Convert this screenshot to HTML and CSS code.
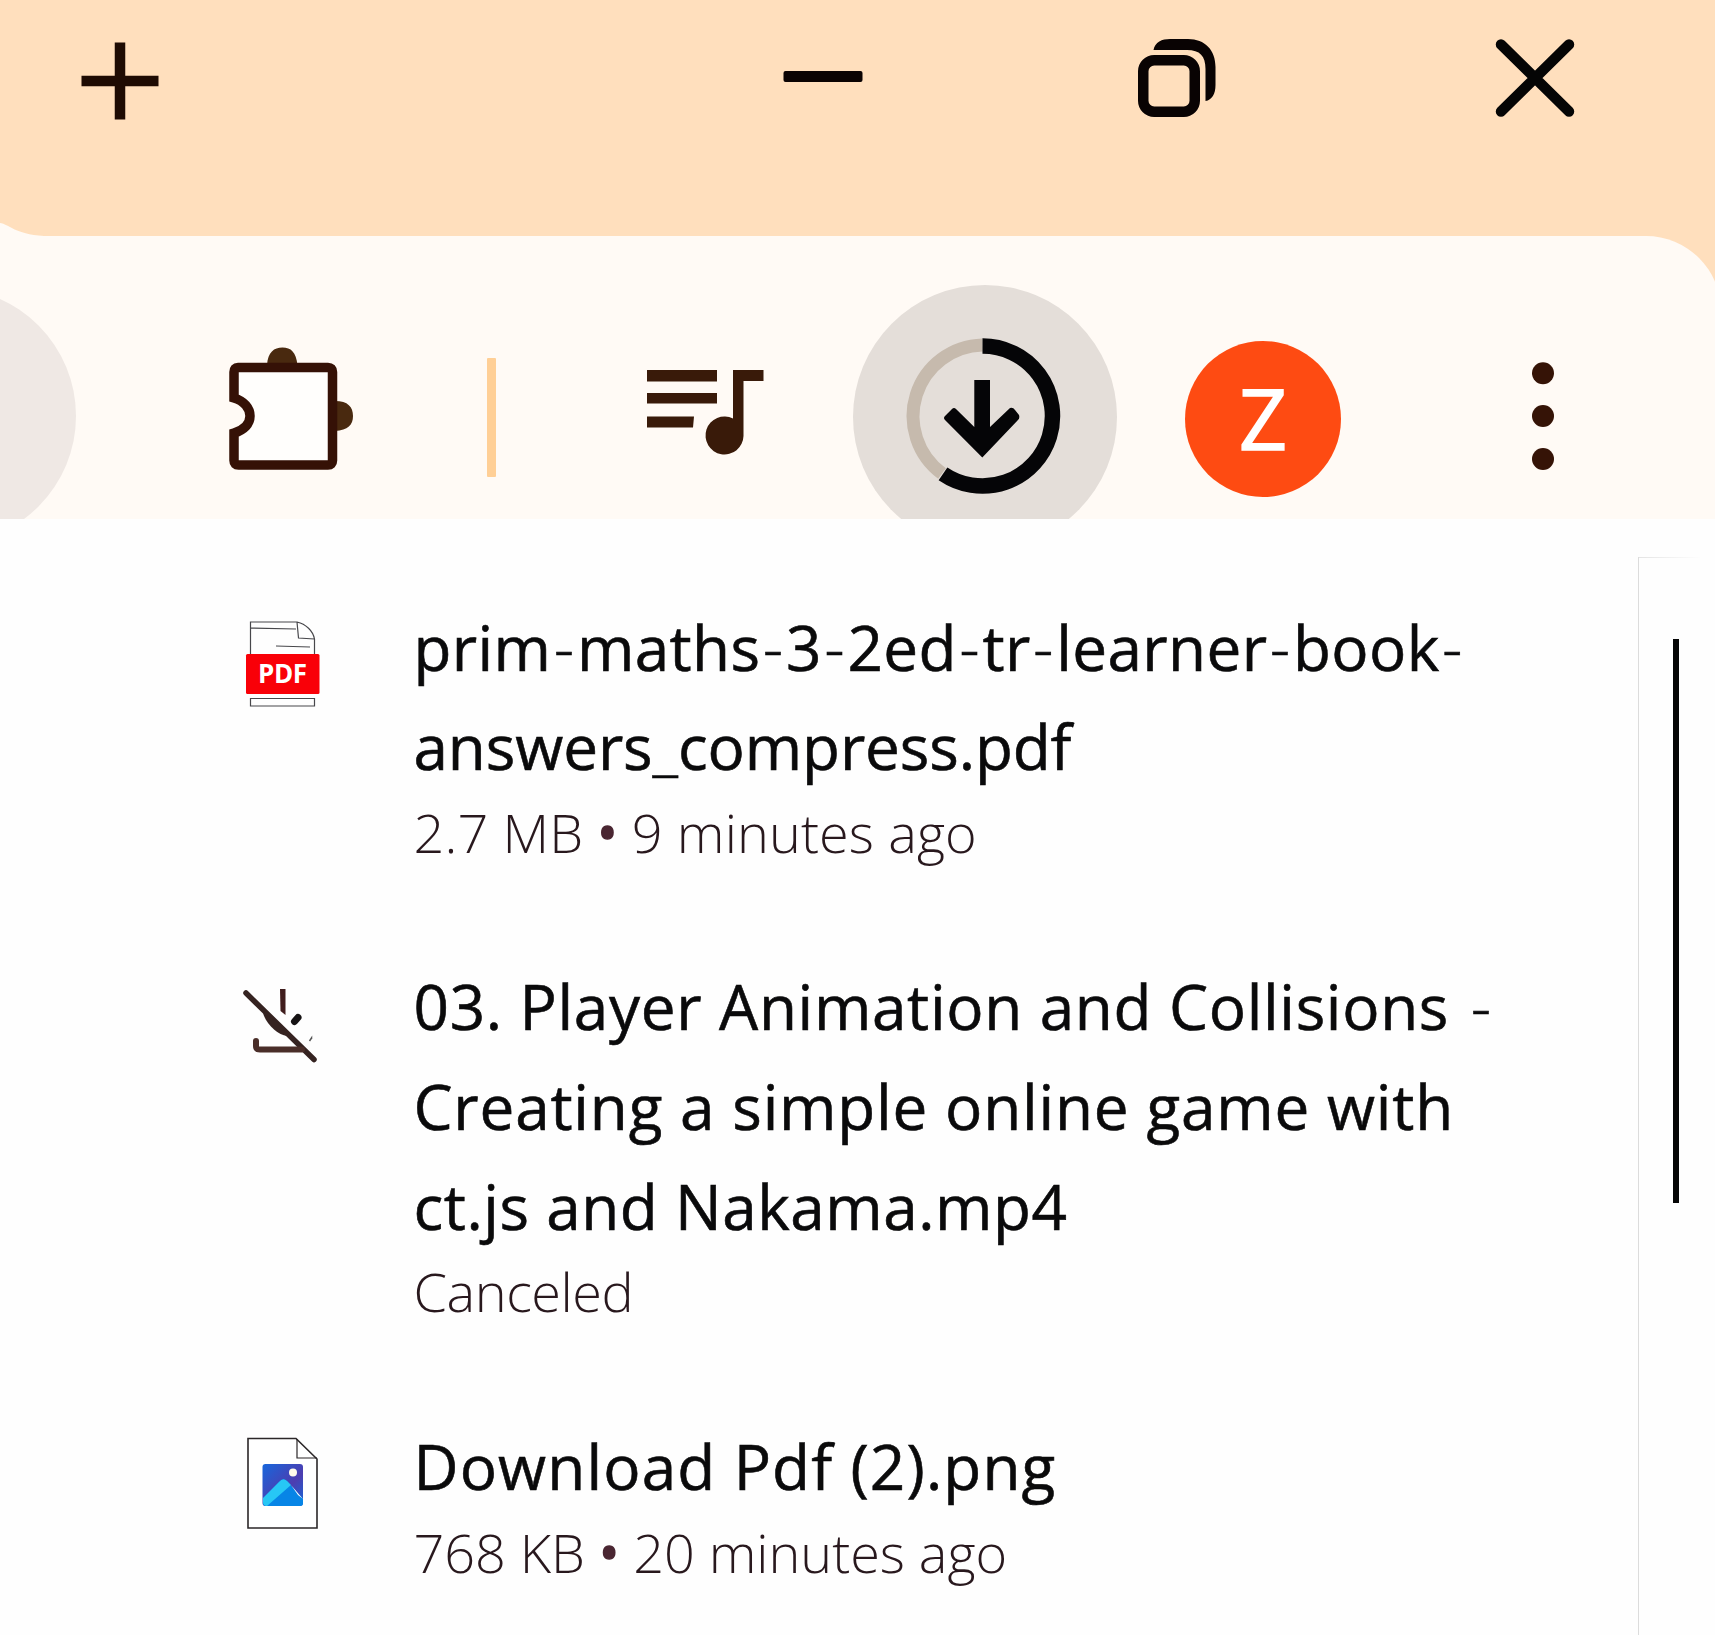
FILE: index.html
```html
<!DOCTYPE html>
<html lang="en">
<head>
<meta charset="utf-8">
<title>Downloads</title>
<link rel="stylesheet" href="styles.css">
</head>
<body>
<div class="window">
  <header class="titlebar">
    <svg class="tab-curve" width="44" height="13" viewBox="0 0 44 13"><path d="M0 0C9 1 14 11 44 13H0Z"/></svg>
    <svg class="new-tab" width="80" height="80" viewBox="0 0 80 80"><path d="M40 1.500V78.500M1.500 40H78.500"/></svg>
    <svg class="minimize" width="80" height="80" viewBox="0 0 80 80"><rect x=".5" y="32" width="79" height="11" rx="2"/></svg>
    <svg class="restore" width="80" height="80" viewBox="0 0 80 80"><rect x="6.250" y="22.250" width="51.500" height="51.500" rx="11"/><path class="solid" d="M16.500 12C18 4 25 1 33 1H51C68 1 78.500 12 78.500 29V47C78.500 56 75 62 68.500 63V31C68.500 18 63 12 50 12Z"/></svg>
    <svg class="close" width="80" height="80" viewBox="0 0 80 80"><path d="M6 6.500L74 73.500M74 6.500L6 73.500"/></svg>
  </header>
  <div class="toolbar-wrap">
  <nav class="toolbar">
    <span class="edge-button"></span>
    <svg class="puzzle" width="126" height="126" viewBox="228 345 126 126">
      <path class="tab" d="M267 365C268 352 274 347.500 282.500 347.500S296 352 297.500 365ZM335 401C348 401 353 407 353 416S348 430 335 431Z"/>
      <path class="body" d="M238 367.500H328Q332.500 367.500 332.500 372V460.500Q332.500 465 328 465H238.500Q234 465 234 460.500V433C244 430 250 424 250 416S244 401 234 398V372Q234 367.500 238 367.500Z"/>
    </svg>
    <span class="divider"></span>
    <svg class="media" width="118" height="86" viewBox="647 370 118 86"><path d="M647 370H717V381.500H647ZM647 393H717V403.500H647ZM647 416.500H694L693 427.500H647ZM733 370H763.500V381H743.500V436A19 19 0 1 1 733 418.500Z"/></svg>
    <span class="downloads">
      <svg width="160" height="160" viewBox="903 336 160 160">
        <path class="track" d="M942 473.500A71.200 71.200 0 0 1 982.500 345"/>
        <path class="progress" d="M982.500 346A70 70 0 1 1 943 473.800"/>
        <path d="M974.300 380H990V427L1010 408Q1013 407 1015 410L1019 415Q1020 418 1018 420L982.300 457.500L945 420Q943 418 945 416L952 409Q954 407 956 409L974.300 427Z"/>
      </svg>
    </span>
    <span class="avatar">Z</span>
    <svg class="menu" width="24" height="110" viewBox="0 0 24 110"><circle cx="12" cy="12.300" r="11"/><circle cx="12" cy="55" r="11"/><circle cx="12" cy="98" r="11"/></svg>
  </nav>
  </div>
  <main class="panel">
    <section class="list">
      <article class="item">
        <svg class="icon pdf" width="76" height="90" viewBox="245 620 76 90">
          <path class="outline" d="M250.500 654V622H297C306 624 313 631 314.500 639V654M297 622L298.500 638L314.500 639M251 628L296 629M276 646L310 647M250.500 698.500H314.500V706H250.500Z"/>
          <rect x="246" y="654" width="73.500" height="40" rx="1.500" fill="#f90008"/>
          <text x="258" y="683" textLength="49">PDF</text>
        </svg>
        <div class="text">
          <div class="name first">prim<i>-</i>maths<i>-</i>3<i>-</i>2ed<i>-</i>tr<i>-</i>learner<i>-</i>book<i>-</i></div>
          <div class="name tight">answers<b>_</b>compress.pdf</div>
          <div class="meta">2.7 MB <b>•</b> 9 minutes ago</div>
        </div>
      </article>
      <article class="item">
        <svg class="icon" width="76" height="78" viewBox="242 986 76 78">
          <path d="M246 993L314 1059.500" fill="none" stroke="#352321" stroke-width="5.500" stroke-linecap="round"/>
          <path d="M263 1013C266 1024 278 1035 287 1036L280 1024Z" fill="#352321"/>
          <path d="M256 1041V1046Q256 1049.500 260 1049.500H302" fill="none" stroke="#4a2e29" stroke-width="6" stroke-linecap="round"/>
          <path d="M280 989H285.500V1015L280.500 1011Z" fill="#401d1d"/>
          <path d="M294.500 1021.500L298 1017.500" stroke="#161314" stroke-width="7" stroke-linecap="round"/>
          <path d="M309.500 1041L311.500 1038V1039" fill="none" stroke="#555" stroke-width="1.500"/>
        </svg>
        <div class="text">
          <div class="name long">03. Player Animation and Collisions <i>-</i></div>
          <div class="name wide">Creating a simple online game with</div>
          <div class="name medium">ct.js and Nakama.mp4</div>
          <div class="meta status">Canceled</div>
        </div>
      </article>
      <article class="item">
        <svg class="icon image" width="76" height="94" viewBox="245 1436 76 94">
          <defs><linearGradient id="sky" x1="0" y1="0" x2="1" y2="1"><stop offset="0" stop-color="#1767dc"/><stop offset=".6" stop-color="#4d3db0"/><stop offset="1" stop-color="#1467d8"/></linearGradient></defs>
          <path d="M248 1438.500H296L317 1459V1528H248Z" fill="#fff" stroke="#2b2728" stroke-width="1.600"/>
          <path d="M297 1439V1458H317" fill="none" stroke="#2b2728" stroke-width="1.200"/>
          <rect x="262.500" y="1464" width="40.500" height="42" rx="3" fill="url(#sky)"/>
          <path d="M263 1499L279 1482Q283 1477 287 1481L303 1499V1503Q303 1506 300 1506H266Q263 1506 263 1503Z" fill="#0785e6"/>
          <path d="M263 1498L279 1482Q283 1477 287 1481L291 1485L267 1506Q263 1506 263 1502Z" fill="#27c7f5"/>
          <path d="M291 1485L303 1499L298 1495Z" fill="#fff"/>
          <circle cx="293" cy="1472.500" r="4" fill="#fffbea"/>
        </svg>
        <div class="text">
          <div class="name file">Download Pdf (2).png</div>
          <div class="meta last">768 KB <b>•</b> 20 minutes ago</div>
        </div>
      </article>
    </section>
    <aside class="rail"><div class="thumb"></div></aside>
  </main>
</div>
</body>
</html>
```
FILE: styles.css
```css
* { box-sizing: border-box; }
body { margin: 0; background: #fff; font-family: "Open Sans", "Noto Sans", sans-serif; }
svg { display: block; flex: none; overflow: visible; }

.window { width: 1715px; height: 1635px; overflow: hidden; display: flex; flex-direction: column; }

.titlebar { height: 236px; flex: none; display: flex; align-items: flex-start; background: #ffdfbd; }
.titlebar svg { fill: none; stroke: #090303; stroke-width: 10.5; }
.titlebar .tab-curve { align-self: flex-end; fill: #fffaf5; stroke: none; }
.titlebar .new-tab { margin: 41px 0 0 35.5px; stroke: #1e0b03; stroke-linecap: butt; }
.titlebar .minimize { margin: 38.5px 0 0 623.5px; fill: #0b0303; stroke: none; }
.titlebar .restore { margin: 38px 0 0 273.5px; }
.titlebar .solid { fill: #090303; stroke: none; }
.titlebar .close { margin: 38px 0 0 278px; stroke: #050505; stroke-linecap: round; }

.toolbar-wrap { height: 283px; flex: none; overflow: hidden; background: #ffdfbd; }
.toolbar { width: 1721px; height: 283px; display: flex; align-items: flex-start; background: #fffaf5; border-top-right-radius: 75px; }
.edge-button { flex: none; width: 256px; height: 256px; margin: 52px 0 0 -180px; border-radius: 50%; background: #efe8e4; }
.puzzle { margin: 109px 0 0 152px; }
.puzzle .tab { fill: #49290f; }
.puzzle .body { fill: #fffefc; stroke: #351106; stroke-width: 9.5; }
.divider { flex: none; width: 9px; height: 119px; margin: 122px 0 0 132.5px; background: #ffcf96; border-radius: 1px; }
.media { margin: 134px 0 0 151px; fill: #391a09; }
.downloads { flex: none; width: 264px; height: 264px; margin: 49px 0 0 88.5px; padding: 51px 49.5px; border-radius: 50%; background: #e4ded9; }
.downloads svg { fill: #050507; }
.downloads .track { fill: none; stroke: #c6baad; stroke-width: 13; }
.downloads .progress { fill: none; stroke: #050507; stroke-width: 15.5; }
.avatar { flex: none; width: 156px; height: 156px; margin: 105px 0 0 68px; border-radius: 50%; background: #fe4b12; color: #fff; font-size: 84px; line-height: 154px; text-align: center; -webkit-text-stroke: 1.5px #fff; }
.menu { margin: 125px 0 0 190px; fill: #351306; }

.panel { flex: 1; min-height: 0; display: flex; background: #fefefe; }
.list { flex: none; width: 1638px; padding: 77px 0 0 242px; display: flex; flex-direction: column; gap: 88px; }
.item { display: flex; align-items: flex-start; }
.icon { width: 76px; margin: 30px 95.5px 0 0; }
.icon.pdf { margin: 24px 92.5px 0 3px; }
.icon.image { margin: 19.5px 92.5px 0 3px; }
.pdf .outline { fill: none; stroke: #47474b; stroke-width: 1.2; }
.pdf text { font-size: 26px; font-weight: 700; fill: #fff; }

.name { font-size: 62px; line-height: 101px; height: 100px; color: #0a0a0b; white-space: nowrap; -webkit-text-stroke: .6px #0a0a0b; }
.name i { font-style: normal; font-weight: 300; margin: 0 2.6px; }
.name b { font-weight: 300; }
.first { letter-spacing: .4px; line-height: 102px; }
.tight { letter-spacing: -.1px; }
.long { letter-spacing: .68px; }
.long i { margin-left: 5px; }
.wide { letter-spacing: .82px; }
.medium { letter-spacing: .55px; }
.file { letter-spacing: 1.15px; }
.meta { font-size: 54px; line-height: 72px; height: 72px; font-weight: 300; letter-spacing: .1px; color: #28181d; white-space: nowrap; }
.meta b { font-weight: 400; -webkit-text-stroke: 1.5px #4a2632; color: #4a2632; }
.status { letter-spacing: -.45px; line-height: 71px; }
.last { letter-spacing: -.05px; }

.rail { flex: 1; margin-top: 38px; border-left: 1.5px solid #dcdcdc; background: linear-gradient(90deg, #e4e4e4, #fefefe 62px) top / 100% 1px no-repeat; }
.thumb { width: 5.5px; height: 564px; margin: 82px 0 0 34px; background: #050606; }
```
